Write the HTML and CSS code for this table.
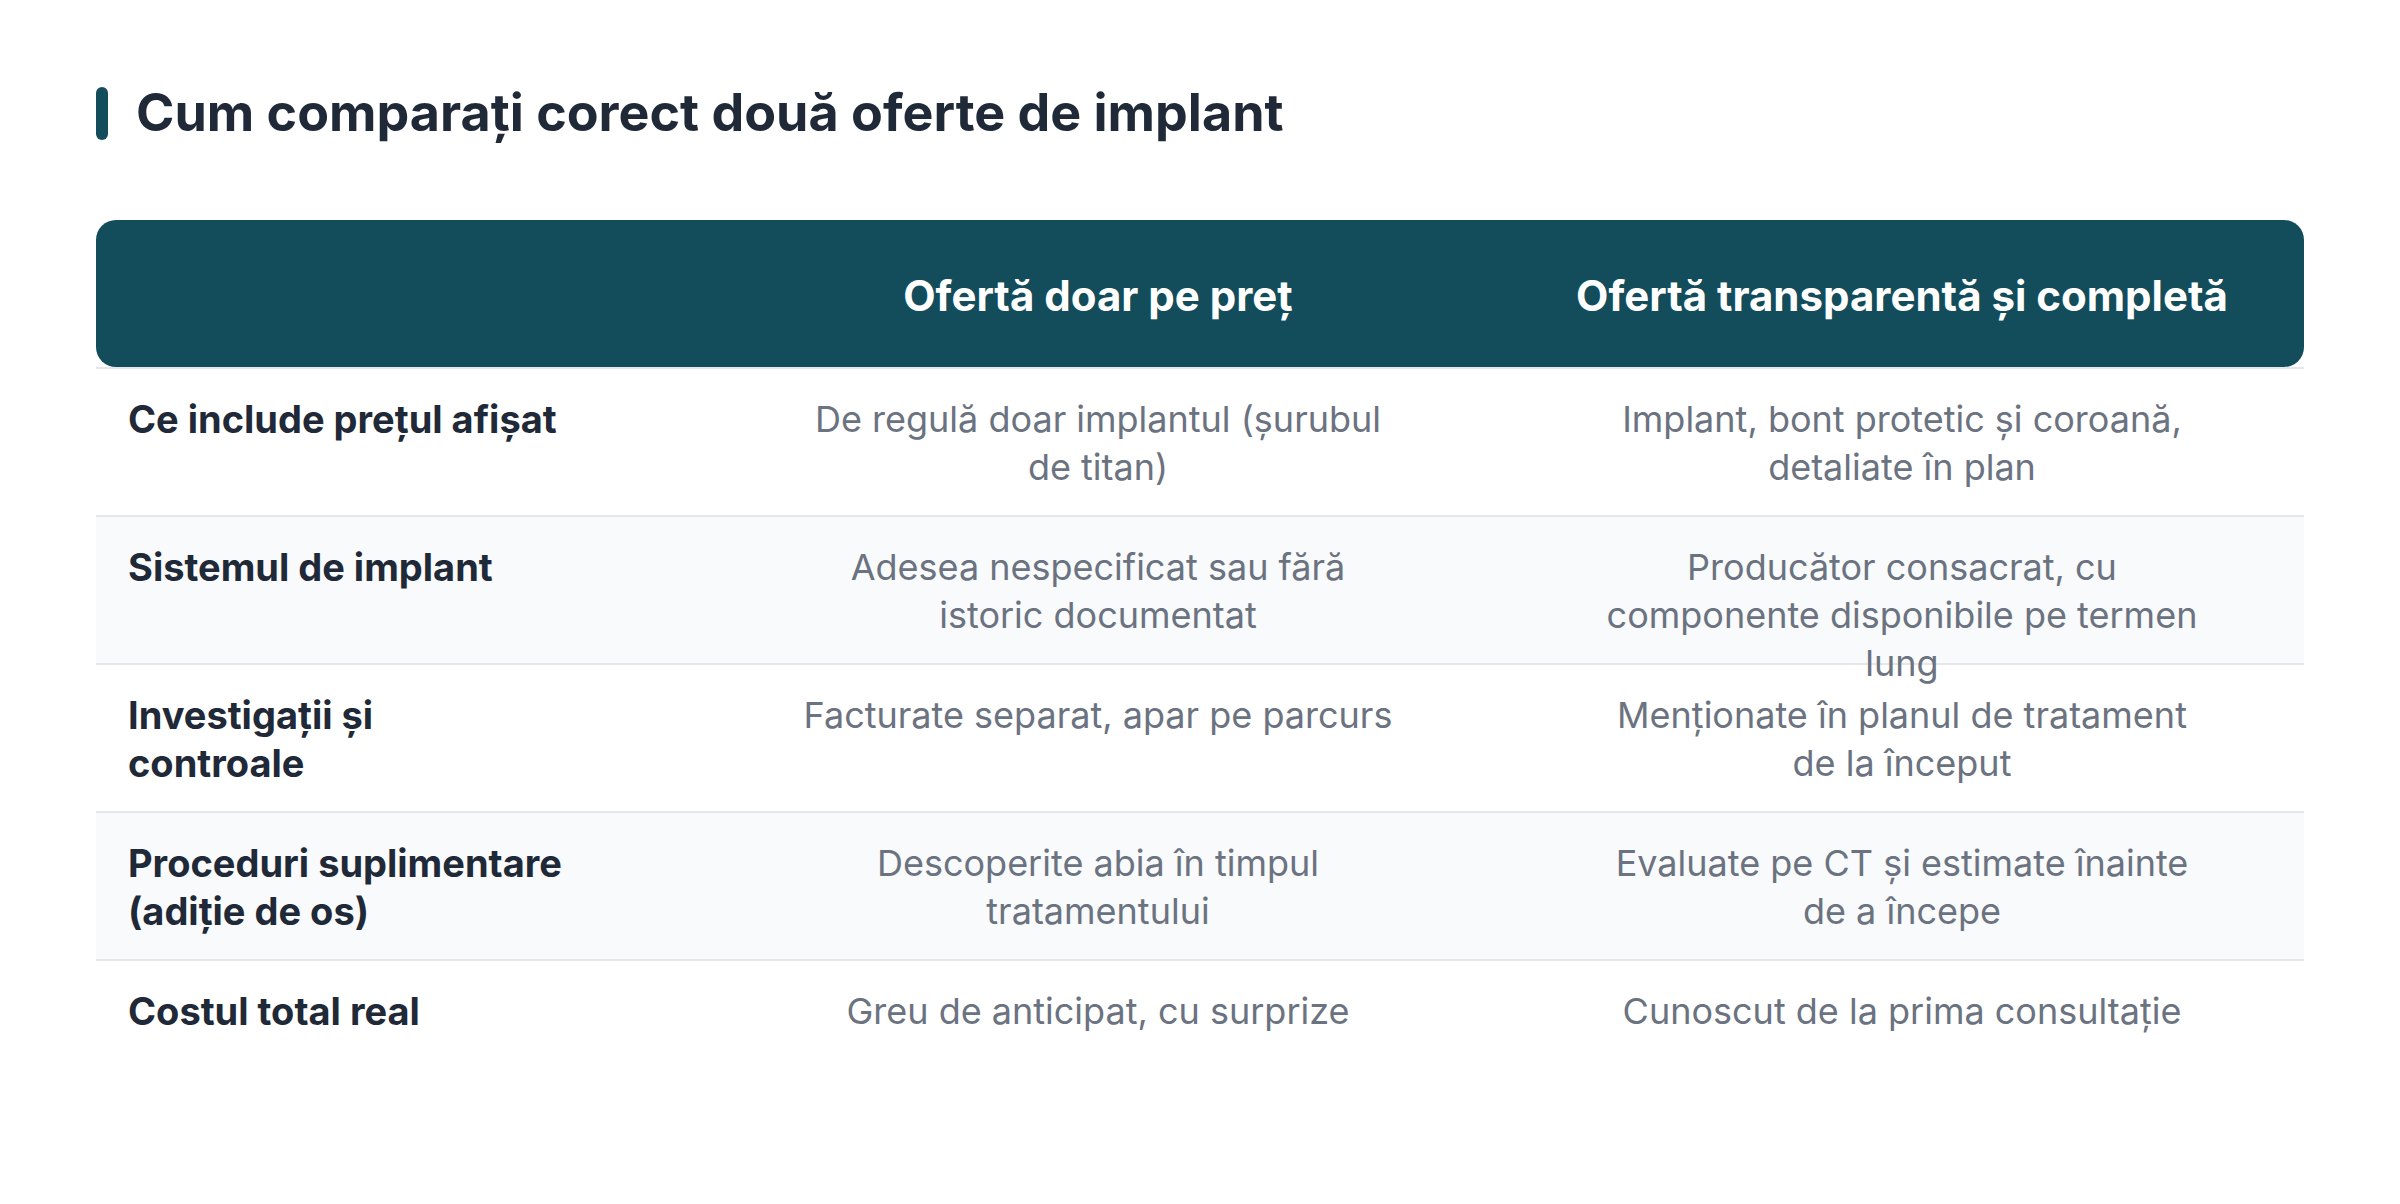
FILE: index.html
```html
<!DOCTYPE html>
<html lang="ro">
<head>
<meta charset="utf-8">
<title>Cum comparați corect două oferte de implant</title>
<link rel="stylesheet" href="styles.css">
</head>
<body>
<main class="page">
  <h1 class="title"><span class="title-bar"></span><span class="title-text">Cum comparați corect două oferte de implant</span></h1>
  <div class="table">
    <div class="thead">
      <div class="th"></div>
      <div class="th">Ofertă doar pe preț</div>
      <div class="th">Ofertă transparentă și completă</div>
    </div>
    <div class="row">
      <div class="cell label">Ce include prețul afișat</div>
      <div class="cell val">De regulă doar implantul (șurubul de titan)</div>
      <div class="cell val">Implant, bont protetic și coroană, detaliate în plan</div>
    </div>
    <div class="row alt">
      <div class="cell label">Sistemul de implant</div>
      <div class="cell val">Adesea nespecificat sau fără istoric documentat</div>
      <div class="cell val">Producător consacrat, cu componente disponibile pe termen lung</div>
    </div>
    <div class="row">
      <div class="cell label">Investigații și<br>controale</div>
      <div class="cell val">Facturate separat, apar pe parcurs</div>
      <div class="cell val">Menționate în planul de tratament de la început</div>
    </div>
    <div class="row alt">
      <div class="cell label">Proceduri suplimentare (adiție de os)</div>
      <div class="cell val">Descoperite abia în timpul tratamentului</div>
      <div class="cell val">Evaluate pe CT și estimate înainte de a începe</div>
    </div>
    <div class="row">
      <div class="cell label">Costul total real</div>
      <div class="cell val">Greu de anticipat, cu surprize</div>
      <div class="cell val">Cunoscut de la prima consultație</div>
    </div>
  </div>
</main>
</body>
</html>
```
FILE: styles.css
```css
* { box-sizing: border-box; }
html, body { margin: 0; padding: 0; background: #ffffff; }
body {
  font-family: Inter, "Noto Sans", "Liberation Sans", sans-serif;
  color: #1f2937;
}
.page { padding: 87px 96px 0; }
.title {
  display: flex;
  align-items: center;
  gap: 28px;
  height: 52px;
  margin: 0 0 81px;
  font-size: 52px;
  font-weight: 700;
  line-height: 1;
  color: #1f2937;
}
.title-bar {
  width: 12px;
  height: 53px;
  border-radius: 6px;
  background: #134d5b;
  flex: none;
}
.table { width: 100%; }
.thead, .row {
  display: grid;
  grid-template-columns: 600px 1fr 1fr;
}
.thead {
  height: 147px;
  background: #134d5b;
  border-radius: 20px;
  align-items: center;
}
.th {
  padding-top: 3px;
  color: #ffffff;
  font-size: 42px;
  font-weight: 700;
  text-align: center;
}
.row {
  height: 148px;
  border-top: 2px solid #e5e7eb;
  line-height: 48px;
}
.row.alt { background: #f8fafc; }
.cell { padding-top: 26px; }
.label {
  padding-left: 32px;
  padding-right: 120px;
  font-size: 38px;
  font-weight: 700;
  color: #1f2937;
}
.val {
  padding-left: 102px;
  padding-right: 102px;
  font-size: 36px;
  text-align: center;
  color: #6b7280;
}
```
